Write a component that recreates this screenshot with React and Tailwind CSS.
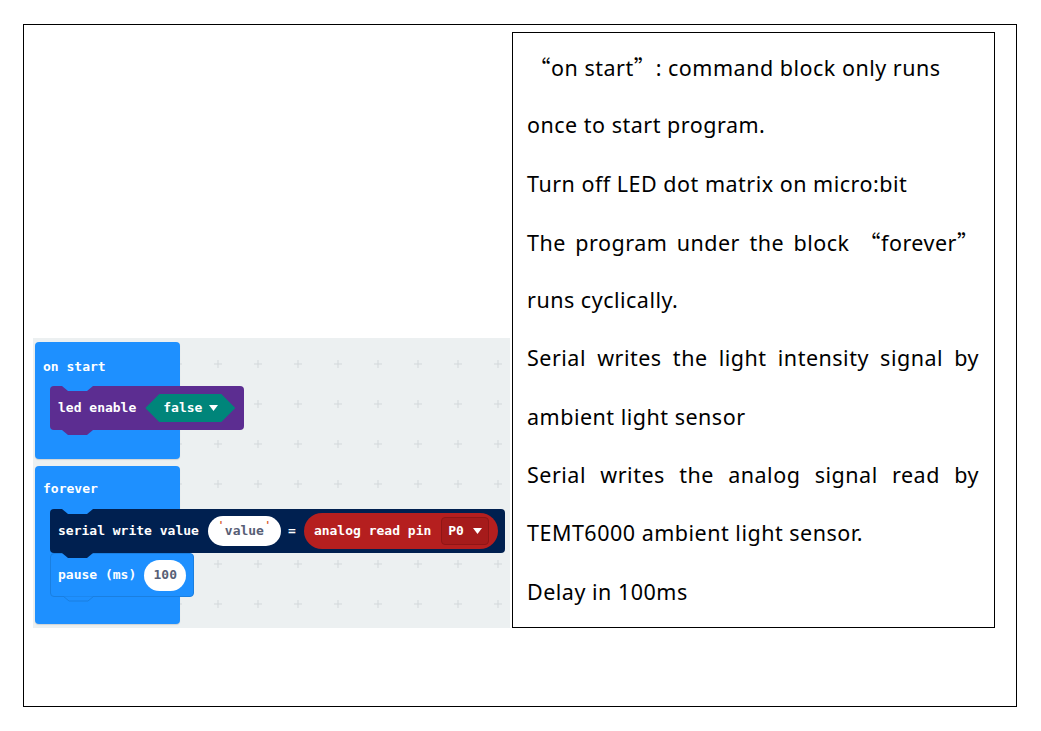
import React from 'react';

const MONO = { fontFamily: '"DejaVu Sans Mono", "Liberation Mono", monospace' };

function Notch({ color }) {
  // dent cut into the top edge of a statement block
  return (
    <svg className="absolute top-0 left-[12px]" width="31" height="5" viewBox="0 0 31 5">
      <path d="M0 0 L6 5 H25 L31 0 Z" fill={color} />
    </svg>
  );
}

function Tab({ color, stroke }) {
  return (
    <svg className="absolute top-full left-[12px]" width="31" height="6" viewBox="0 0 31 6">
      <path d="M0 0 L6 5 H25 L31 0 Z" fill={color} stroke={stroke || 'none'} strokeWidth="1" />
    </svg>
  );
}

function Caret({ color = '#fff' }) {
  return (
    <svg width="9" height="6" viewBox="0 0 9 6" className="shrink-0">
      <path d="M0 0 H9 L4.5 6 Z" fill={color} />
    </svg>
  );
}

function GridPlus() {
  return (
    <svg className="absolute inset-0 w-full h-full" aria-hidden="true">
      <defs>
        <pattern id="plus" x="165" y="6" width="40" height="40" patternUnits="userSpaceOnUse">
          <path d="M20 16 V24 M16 20 H24" stroke="#d3d8db" strokeWidth="1" />
        </pattern>
      </defs>
      <rect width="100%" height="100%" fill="url(#plus)" />
    </svg>
  );
}

function Workspace() {
  return (
    <div className="relative w-[477px] h-[290px] bg-[#ecf0f1] pl-[2px] pt-[4px] flex flex-col gap-[7px] shrink-0">
      <GridPlus />

      {/* on start */}
      <div className="relative w-[145px] h-[117px] rounded-[4px] bg-[#1e90ff] shadow-[0_1px_1px_rgba(0,0,0,0.12)]">
        <div className="h-[44px] pl-[8px] pt-[16px] text-[13px] leading-[18px] font-bold text-white" style={MONO}>
          on start
        </div>
        <div className="relative ml-[15px] w-[194px] h-[44px] rounded-[4px] bg-[#5c2d91] flex items-center pl-[8px] gap-[9px]">
          <Notch color="#1e90ff" />
          <span className="text-[13px] font-bold text-white whitespace-nowrap" style={MONO}>led enable</span>
          <div className="w-[90px] h-[28px] bg-[#00857a] [clip-path:polygon(0_50%,14px_0,calc(100%-14px)_0,100%_50%,calc(100%-14px)_100%,14px_100%)] flex items-center pl-[18px] gap-[7px]">
            <span className="text-[13px] font-bold text-white" style={MONO}>false</span>
            <Caret />
          </div>
          <Tab color="#5c2d91" />
        </div>
      </div>

      {/* forever */}
      <div className="relative w-[145px] h-[158px] rounded-[4px] bg-[#1e90ff] shadow-[0_1px_1px_rgba(0,0,0,0.12)]">
        <div className="h-[43px] pl-[8px] pt-[14px] text-[13px] leading-[18px] font-bold text-white" style={MONO}>
          forever
        </div>
        <div className="relative z-10 ml-[15px] w-[455px] h-[44px] rounded-[4px] bg-[#002050] flex items-center pl-[8px]">
          <Notch color="#1e90ff" />
          <span className="text-[13px] font-bold text-white whitespace-nowrap" style={MONO}>serial write value</span>
          <div className="relative ml-[9px] w-[73px] h-[30px] rounded-full bg-white flex items-center justify-center">
            <span className="absolute left-[10px] top-[5px] text-[10px] leading-none font-bold text-[#d85a2a]" style={MONO}>'</span>
            <span className="text-[13px] font-bold text-[#575e75]" style={MONO}>value</span>
            <span className="absolute right-[10px] top-[5px] text-[10px] leading-none font-bold text-[#d85a2a]" style={MONO}>'</span>
          </div>
          <span className="ml-[7px] w-[8px] text-[13px] font-bold text-white" style={MONO}>=</span>
          <div className="ml-[8px] w-[194px] h-[36px] rounded-full bg-[#b51f1f] flex items-center pl-[10px]">
            <span className="text-[13px] font-bold text-white whitespace-nowrap" style={MONO}>analog read pin</span>
            <div className="ml-[10px] w-[48px] h-[28px] rounded-[4px] bg-[#a61b1b] border border-[#8f1616] flex items-center pl-[6px] gap-[9px]">
              <span className="text-[13px] font-bold text-white" style={MONO}>P0</span>
              <Caret />
            </div>
          </div>
          <Tab color="#002050" />
        </div>
        <div className="relative ml-[15px] w-[144px] h-[44px] rounded-[4px] bg-[#1e90ff] border border-[#1a7fe0] flex items-center pl-[7px] gap-[8px]">
          <span className="text-[13px] font-bold text-white whitespace-nowrap" style={MONO}>pause (ms)</span>
          <div className="w-[42px] h-[31px] rounded-full bg-white flex items-center justify-center">
            <span className="text-[13px] font-bold text-[#575e75]" style={MONO}>100</span>
          </div>
          <Tab color="#1e90ff" stroke="#1a7fe0" />
        </div>
      </div>
    </div>
  );
}

const Q = ({ children }) => (
  <span style={{ fontFamily: '"Noto Sans CJK SC", sans-serif' }}>{children}</span>
);

function Description() {
  const line = 'h-[58.3px] whitespace-nowrap';
  const just = 'h-[58.3px] whitespace-nowrap text-justify [text-align-last:justify]';
  return (
    <div
      className="w-[483px] h-[596px] border border-black pt-[5px] pl-[14px] pr-[15px] text-[21.5px] tracking-[0.5px] leading-[58.3px] text-black"
      style={{ fontFamily: '"Noto Sans", "Open Sans", sans-serif' }}
    >
      <div className={line}>
        <span className="ml-[2px]"><Q>“</Q>on start<Q>”</Q></span>: command block only runs
      </div>
      <div className={line}>once to start program.</div>
      <div className={line}>Turn off LED dot matrix on micro:bit</div>
      <div className={just}>
        The program under the block <Q>“</Q>forever<Q>”</Q>
      </div>
      <div className={line}>runs cyclically.</div>
      <div className={just}>Serial writes the light intensity signal by</div>
      <div className={line}>ambient light sensor</div>
      <div className={just}>Serial writes the analog signal read by</div>
      <div className={line}>TEMT6000 ambient light sensor.</div>
      <div className={line}>Delay in 100ms</div>
    </div>
  );
}

export default function App() {
  return (
    <div className="min-h-[731px] bg-white pt-[24px] pl-[23px]">
      <div className="w-[994px] h-[683px] border border-black pl-[9px] pt-[7px] flex items-start">
        <div className="flex items-end gap-[2px] h-[596px]">
          <Workspace />
          <Description />
        </div>
      </div>
    </div>
  );
}
